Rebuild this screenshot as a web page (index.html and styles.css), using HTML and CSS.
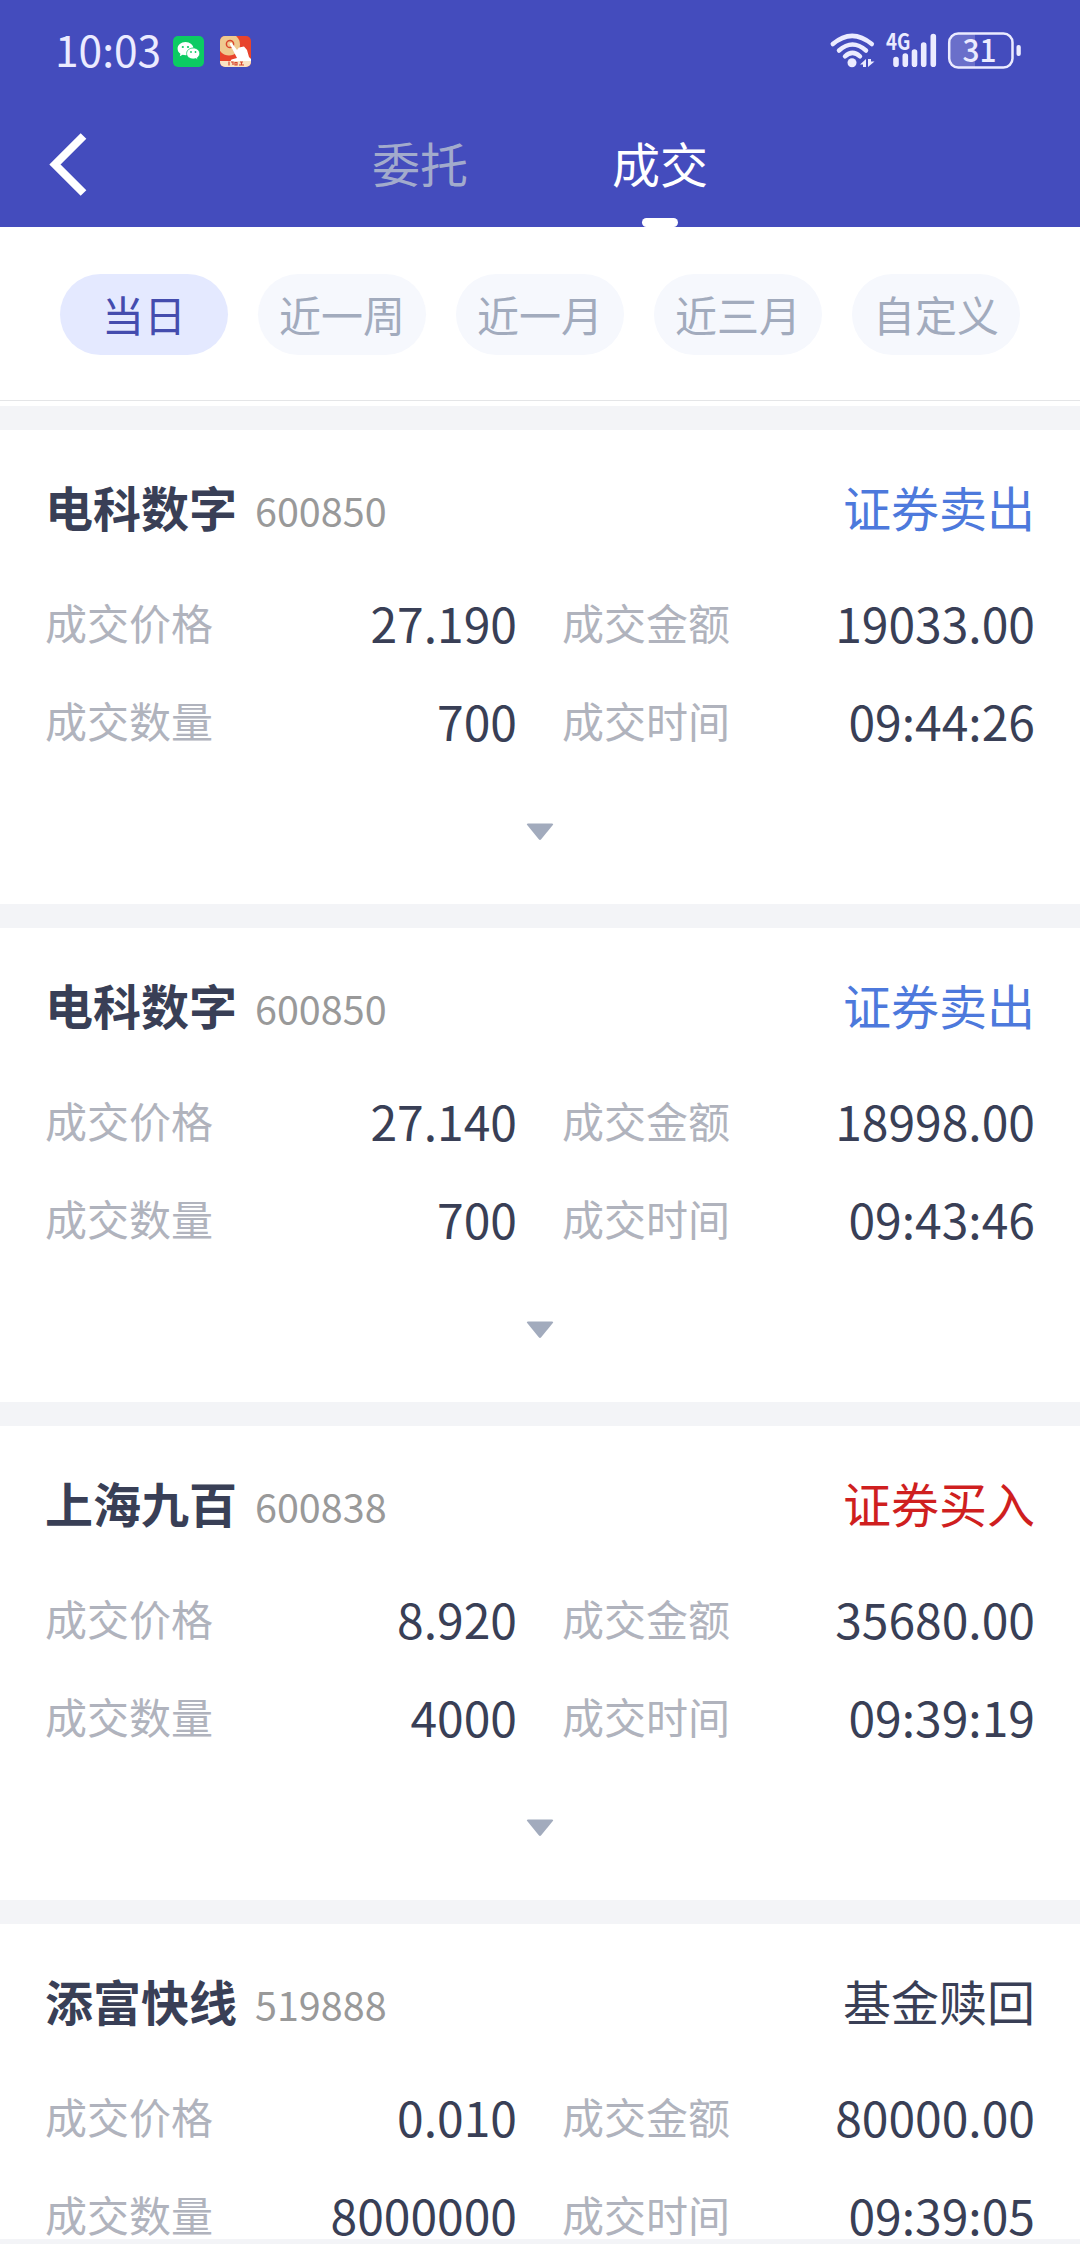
FILE: index.html
```html
<!DOCTYPE html>
<html lang="zh-CN">
<head>
<meta charset="utf-8">
<title>成交</title>
<link rel="stylesheet" href="styles.css">
</head>
<body>
<div class="screen">
  <header class="header">
    <div class="statusbar">
      <div class="status-left">
        <span class="clock">10:03</span>
        <svg class="app-icon" viewBox="0 0 31 31">
          <rect width="31" height="31" rx="5" fill="#0ccb63"/>
          <path d="M12.500 6C8 6 4.600 9 4.600 12.700c0 2.100 1.100 3.900 2.800 5.100l-.6 2.400 2.800-1.400c1 .3 1.900.4 2.900.4 4.500 0 8-2.800 8-6.500S17 6 12.500 6z" fill="#fff"/>
          <path d="M20.300 12c-3.800 0-6.700 2.400-6.700 5.500s2.900 5.500 6.700 5.500c.9 0 1.700-.1 2.400-.4l2.200 1.200-.6-2c1.500-1 2.400-2.500 2.400-4.300 0-3.100-2.700-5.500-6.400-5.500z" fill="#fff" stroke="#0ccb63" stroke-width=".8"/>
          <g fill="#0ccb63"><circle cx="9.800" cy="11" r="1.100"/><circle cx="15" cy="11" r="1.100"/><circle cx="18" cy="16" r=".9"/><circle cx="22.500" cy="16" r=".9"/></g>
        </svg>
        <svg class="app-icon" viewBox="0 0 31 31">
          <defs><clipPath id="tile"><rect width="31" height="31" rx="5"/></clipPath></defs>
          <g clip-path="url(#tile)">
            <rect width="31" height="31" fill="#e8432c"/>
            <circle cx="9" cy="8.500" r="11" fill="#efc98f"/>
            <circle cx="10" cy="8" r="3.600" fill="none" stroke="#d8452c" stroke-width="1.500"/>
            <path d="M9.500 7.500l2-1 5.500 7.500 2-2.500 5-1 3 3.500 2 7 2 2v3H10l1.500-2.500 5.500-1.500z" fill="#fff"/>
            <path d="M0 25h31v6H0z" fill="#fae3c4"/>
            <path d="M9 25.500v4M11 26h2v3M15 26.500h2v2.500h-2zM20 26h3M19 29h5M21.500 26v3" stroke="#d8452c" stroke-width="1.200" fill="none"/>
          </g>
        </svg>
      </div>
      <svg class="status-right" viewBox="0 0 194 40">
        <g fill="none" stroke="#ebebff" stroke-width="4.500" stroke-linecap="round">
          <path d="M1.800 13Q21 -3.400 40.800 13"/><path d="M8 19.500Q21.500 7.500 35 19.500"/><path d="M14 25.300Q21.500 18.500 29 25.300"/>
        </g>
        <circle cx="21" cy="31.800" r="4.500" fill="#ebebff"/>
        <path d="M29 33.500L35 28v8h-3v-2.500zM37 28h3v2.500h3.500L37 36z" fill="#ebebff"/>
        <text x="55" y="19.300" class="net" textLength="24.500" lengthAdjust="spacingAndGlyphs">4G</text>
        <g stroke="#ebebff" stroke-width="5.600" stroke-linecap="round"><path d="M65 28.500v4.700M74.300 25v8.200M83.500 21v12.200M92.700 14v19.200M102.300 5.600v27.600"/></g>
        <path d="M126 3h18v33h-18a7 7 0 0 1-7-7V10a7 7 0 0 1 7-7z" fill="#6a6fca"/>
        <rect x="118.200" y="2.500" width="63.300" height="34" rx="9" fill="none" stroke="#ebebff" stroke-width="2.500"/>
        <rect x="185.500" y="14" width="4.300" height="11" rx="2" fill="#ebebff"/>
        <text x="131.500" y="30.800" class="battery-level" textLength="34" lengthAdjust="spacingAndGlyphs">31</text>
      </svg>
    </div>
    <nav class="navbar">
      <svg class="back" viewBox="0 0 38 63"><path d="M34.500 3L6 31.500 34.500 60" fill="none" stroke="#fff" stroke-width="8"/></svg>
      <div class="tabs">
        <a class="tab">委托</a>
        <a class="tab tab-active">成交</a>
      </div>
    </nav>
  </header>

  <div class="filters">
    <span class="pill pill-active">当日</span>
    <span class="pill">近一周</span>
    <span class="pill">近一月</span>
    <span class="pill">近三月</span>
    <span class="pill">自定义</span>
  </div>

  <main class="list">
    <section class="card">
      <div class="card-head"><h2 class="name">电科数字</h2><span class="code">600850</span><span class="side sell">证券卖出</span></div>
      <dl class="grid">
        <dt>成交价格</dt><dd>27.190</dd><dt>成交金额</dt><dd>19033.00</dd>
        <dt>成交数量</dt><dd>700</dd><dt>成交时间</dt><dd>09:44:26</dd>
      </dl>
      <svg class="expand" viewBox="0 0 28 18"><path d="M2 .5h24q2 0 .8 1.500L15.200 16.300q-1.200 1.400-2.400 0L1.200 2Q0 .5 2 .5z" fill="#a2abbd"/></svg>
    </section>
    <section class="card">
      <div class="card-head"><h2 class="name">电科数字</h2><span class="code">600850</span><span class="side sell">证券卖出</span></div>
      <dl class="grid">
        <dt>成交价格</dt><dd>27.140</dd><dt>成交金额</dt><dd>18998.00</dd>
        <dt>成交数量</dt><dd>700</dd><dt>成交时间</dt><dd>09:43:46</dd>
      </dl>
      <svg class="expand" viewBox="0 0 28 18"><path d="M2 .5h24q2 0 .8 1.500L15.200 16.300q-1.200 1.400-2.400 0L1.200 2Q0 .5 2 .5z" fill="#a2abbd"/></svg>
    </section>
    <section class="card">
      <div class="card-head"><h2 class="name">上海九百</h2><span class="code">600838</span><span class="side buy">证券买入</span></div>
      <dl class="grid">
        <dt>成交价格</dt><dd>8.920</dd><dt>成交金额</dt><dd>35680.00</dd>
        <dt>成交数量</dt><dd>4000</dd><dt>成交时间</dt><dd>09:39:19</dd>
      </dl>
      <svg class="expand" viewBox="0 0 28 18"><path d="M2 .5h24q2 0 .8 1.500L15.200 16.300q-1.200 1.400-2.400 0L1.200 2Q0 .5 2 .5z" fill="#a2abbd"/></svg>
    </section>
    <section class="card">
      <div class="card-head"><h2 class="name">添富快线</h2><span class="code">519888</span><span class="side">基金赎回</span></div>
      <dl class="grid">
        <dt>成交价格</dt><dd>0.010</dd><dt>成交金额</dt><dd>80000.00</dd>
        <dt>成交数量</dt><dd>8000000</dd><dt>成交时间</dt><dd>09:39:05</dd>
      </dl>
    </section>
  </main>
</div>
</body>
</html>
```
FILE: styles.css
```css
* { box-sizing: border-box; margin: 0; padding: 0; }

body {
  width: 1080px;
  height: 2244px;
  overflow: hidden;
  background: #f3f4f7;
  color: #393f56;
  font-family: "Noto Sans CJK SC", sans-serif;
}

.screen {
  display: flex;
  flex-direction: column;
  height: 2244px;
  padding-bottom: 5px;
}

/* Header */
.header { flex: none; height: 227px; background: #444cbd; }

.statusbar {
  display: flex;
  justify-content: space-between;
  align-items: center;
  height: 102px;
  padding: 0 55px;
}
.status-left { display: flex; align-items: center; }
.clock {
  width: 118px;
  padding-bottom: 4px;
  color: #ebebff;
  font-size: 42.500px;
  line-height: 60px;
  white-space: nowrap;
}
.app-icon { width: 31px; height: 31px; margin-right: 16px; }
.status-right { width: 194px; height: 40px; overflow: visible; }
.net { fill: #ebebff; font-size: 22px; font-weight: 700; }
.battery-level { fill: #ebebff; font-size: 31px; font-weight: 500; }

.navbar { display: flex; align-items: center; height: 125px; padding-left: 49px; }
.back { width: 38px; height: 63px; }
.tabs { display: flex; gap: 144px; height: 125px; margin-left: 285px; }
.tab {
  display: flex;
  flex-direction: column;
  align-items: center;
  width: 96px;
  padding-top: 25px;
  color: #a2abcc;
  font-size: 48px;
  line-height: 70px;
}
.tab-active { color: #fff; }
.tab-active::after {
  content: "";
  width: 36px;
  height: 9px;
  margin-top: 21px;
  border-radius: 5px;
  background: #fff;
}

/* Date range filters */
.filters {
  flex: none;
  display: flex;
  gap: 30px;
  height: 174px;
  padding: 47px 60px 0;
  border-bottom: 1px solid #e4e5e7;
  background: #fff;
}
.pill {
  width: 168px;
  height: 81px;
  border-radius: 41px;
  background: #f6f8fd;
  color: #a2abbd;
  font-size: 42px;
  line-height: 79px;
  text-align: center;
}
.pill-active { background: #e4e9ff; color: #444cae; }

/* Records */
.list {
  flex: 1;
  display: flex;
  flex-direction: column;
  gap: 24px;
  min-height: 0;
  overflow: hidden;
  border-top: 5px solid #fff;
  padding-top: 24px;
}
.card { flex: none; height: 474px; padding: 41px 45px 0; background: #fff; }
.card-head { display: flex; height: 70px; line-height: 70px; }
.name { font-size: 48px; font-weight: 700; }
.code { margin-left: 18px; padding-top: 4px; color: #999; font-size: 39.500px; }
.side { margin-left: auto; font-size: 48px; }
.sell { color: #4d79dc; }
.buy { color: #cf1f1f; }

.grid {
  display: grid;
  grid-template-columns: 200px 272px 245px 273px;
  grid-auto-rows: 98px;
  margin-top: 32px;
  line-height: 98px;
}
.grid dt { color: #b0b3bd; font-size: 42px; white-space: nowrap; }
.grid dt:nth-of-type(even) { padding-left: 45px; }
.grid dd { font-size: 48px; text-align: right; }

.expand { display: block; width: 28px; height: 18px; margin: 54px auto 0; }
```
